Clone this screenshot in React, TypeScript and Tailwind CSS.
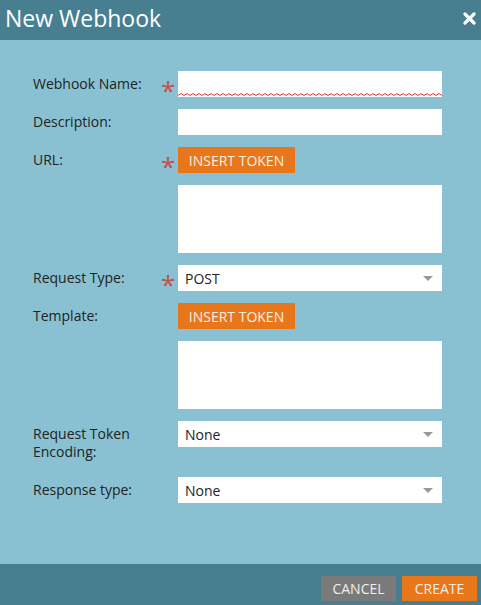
import React from "react";

const Star = () => (
  <span className="w-[17px] shrink-0 flex justify-start text-[#c0504d] text-[26px] leading-none pt-[6px] h-[26px]">*</span>
);
const NoStar = () => <span className="w-[17px] shrink-0" />;

const Caret = () => (
  <svg width="10" height="5" viewBox="0 0 10 5" className="absolute right-[9px] top-[11px]">
    <path d="M0 0 H10 L5 5 Z" fill="#999" />
  </svg>
);

function Row({ label, star, children, className = "" }: { label: React.ReactNode; star?: boolean; children: React.ReactNode; className?: string }) {
  return (
    <div className={"flex items-start " + className}>
      <div className="w-[128px] shrink-0 text-[14px] leading-[18px] text-[#222] pt-[4px]">{label}</div>
      {star ? <Star /> : <NoStar />}
      <div className="flex-1 flex flex-col gap-[12px]">{children}</div>
    </div>
  );
}

const Btn = ({ children }: { children: React.ReactNode }) => (
  <div className="w-[117px] h-[26px] bg-[#e8771c] text-[#fbeee4] text-[14px] flex items-center justify-center">{children}</div>
);

const Select = ({ value }: { value: string }) => (
  <div className="relative h-[26px] bg-white text-[14px] text-[#222] flex items-center pl-[7px]">
    {value}
    <Caret />
  </div>
);

export default function App() {
  return (
    <div className="w-[481px] h-[605px] flex flex-col bg-[#89c1d3]" style={{ fontFamily: '"Open Sans", sans-serif' }}>
      <div className="h-[40px] bg-[#477f91] flex items-center justify-between pl-[5px] pr-[5px]">
        <span className="text-white text-[23px] leading-none -mt-[4px]">New Webhook</span>
        <svg width="13" height="13" viewBox="0 0 13 13" className="mt-[-4px]">
          <path d="M2 2 L11 11 M11 2 L2 11" stroke="white" strokeWidth="3.2" strokeLinecap="round" />
        </svg>
      </div>
      <div className="flex-1 pl-[33px] pr-[39px] pt-[31px] flex flex-col gap-[12px]">
        <Row label="Webhook Name:" star>
          <div className="relative h-[26px] bg-white">
            <svg className="absolute left-0 bottom-[1px]" width="264" height="3" viewBox="0 0 264 3" preserveAspectRatio="none">
              <path d={Array.from({ length: 89 }, (_, i) => `${i === 0 ? "M" : "L"}${i * 3} ${i % 2 ? 0.5 : 2.5}`).join(" ")} stroke="#e33" strokeWidth="1" fill="none" />
            </svg>
          </div>
        </Row>
        <Row label="Description:">
          <div className="h-[26px] bg-white" />
        </Row>
        <Row label="URL:" star>
          <Btn>INSERT TOKEN</Btn>
          <div className="h-[68px] bg-white" />
        </Row>
        <Row label="Request Type:" star>
          <Select value="POST" />
        </Row>
        <Row label="Template:">
          <Btn>INSERT TOKEN</Btn>
          <div className="h-[68px] bg-white" />
        </Row>
        <Row label={<>Request Token<br />Encoding:</>}>
          <Select value="None" />
        </Row>
        <Row label="Response type:" className="mt-[4px]">
          <Select value="None" />
        </Row>
      </div>
      <div className="h-[41px] bg-[#477f91] flex items-start justify-end gap-[6px] pt-[12px] pr-[4px]">
        <div className="w-[75px] h-[25px] bg-[#7a7a7a] text-[#eee] text-[14px] flex items-center justify-center">CANCEL</div>
        <div className="w-[75px] h-[25px] bg-[#e8771c] text-[#fbeee4] text-[14px] flex items-center justify-center">CREATE</div>
      </div>
    </div>
  );
}
